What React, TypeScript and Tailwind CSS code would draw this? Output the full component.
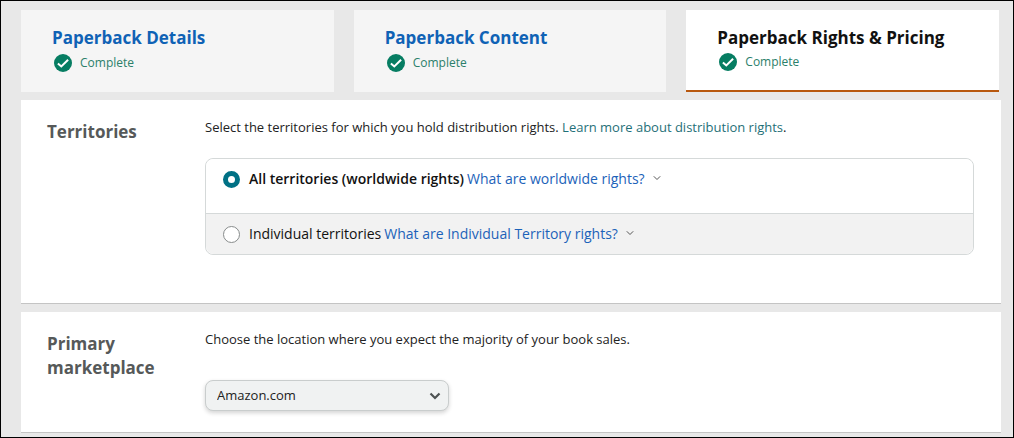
import React, { useState } from 'react';

type Step = { title: string; active?: boolean };

const steps: Step[] = [
  { title: 'Paperback Details' },
  { title: 'Paperback Content' },
  { title: 'Paperback Rights & Pricing', active: true },
];

const territoryOptions = [
  { id: 'worldwide', label: 'All territories (worldwide rights)', help: 'What are worldwide rights?' },
  { id: 'individual', label: 'Individual territories', help: 'What are Individual Territory rights?' },
];

const marketplaces = ['Amazon.com', 'Amazon.co.uk', 'Amazon.de', 'Amazon.fr', 'Amazon.es', 'Amazon.it'];

const CheckBadge: React.FC = () => (
  <svg viewBox="0 0 18 18" className="w-[18px] h-[18px] shrink-0" aria-hidden="true">
    <circle cx="9" cy="9" r="9" fill="#067d62" />
    <path d="M3.9 9.4 L7.3 12.4 L14.1 5.7" fill="none" stroke="#fff" strokeWidth="2" />
  </svg>
);

const StepTab: React.FC<{ step: Step }> = ({ step }) => (
  <li className={`flex-1 h-[82px] px-[31px] pt-4 ${step.active ? 'bg-white border-b-2 border-[#b8580f]' : 'bg-[#f5f5f5]'}`}>
    <h2 className="text-[17px] leading-6 font-bold whitespace-nowrap">
      {step.active ? (
        <span className="text-[#111]">{step.title}</span>
      ) : (
        <a href="#" className="text-[#0f62b5]">{step.title}</a>
      )}
    </h2>
    <p className={`flex items-center gap-2 pl-0.5 text-xs leading-[18px] text-[#2b806a] ${step.active ? 'pt-[3px]' : 'pt-1'}`}>
      <CheckBadge />
      Complete
    </p>
  </li>
);

const Panel: React.FC<{ title: string; className: string; children: React.ReactNode }> = ({ title, className, children }) => (
  <section className={`flex bg-white border-b border-[#c4c4c4] pl-[26px] pr-[27px] pt-[17px] ${className}`}>
    <h3 className="w-[158px] shrink-0 pr-8 pt-[3px] text-[17px] leading-6 font-bold text-[#565959]">{title}</h3>
    <div className="flex-1 min-w-0">{children}</div>
  </section>
);

const App: React.FC = () => {
  const [territory, setTerritory] = useState('worldwide');
  const [marketplace, setMarketplace] = useState(marketplaces[0]);

  return (
    <main className="min-h-screen border border-black bg-[#e8e8e8] pl-5 pr-3 pt-[9px] font-['Open_Sans',sans-serif] text-[13px] leading-5 text-[#222]">
      <ol className="flex gap-5 pr-0.5">
        {steps.map(step => <StepTab key={step.title} step={step} />)}
      </ol>

      <div className="flex flex-col gap-2 pt-2">
        <Panel title="Territories" className="pb-12">
          <p>
            Select the territories for which you hold distribution rights.{' '}
            <a href="#" className="text-[#1f7078]">Learn more about distribution rights</a>.
          </p>
          <fieldset className="mt-[21px] rounded-lg border border-[#d5d9d9] overflow-hidden">
            {territoryOptions.map(({ id, label, help }) => {
              const selected = territory === id;
              return (
                <div key={id} className={`flex items-center pl-[17px] pt-2.5 border-[#d5d9d9] ${id === 'worldwide' ? 'border-b pb-6' : 'pb-2.5'} ${selected ? 'bg-white' : 'bg-[#f2f2f2]'}`}>
                  <input
                    type="radio"
                    id={id}
                    name="territory"
                    checked={selected}
                    onChange={() => setTerritory(id)}
                    className="appearance-none w-[17px] h-[17px] shrink-0 rounded-full bg-white border border-[#888c8c] checked:border-[5px] checked:border-[#007185]"
                  />
                  <label htmlFor={id} className={`pl-[9px] text-sm leading-5 text-[#111] ${selected ? 'font-semibold' : ''}`}>{label}</label>
                  <button type="button" className="flex items-center gap-2 pl-[3px] text-sm leading-5 text-[#1c62b9]">
                    {help}
                    <svg viewBox="0 0 8 8" className="w-2 h-2 -mt-0.5" fill="none" stroke="#555" aria-hidden="true">
                      <path d="M0.8 2.3 L4 5.5 L7.2 2.3" />
                    </svg>
                  </button>
                </div>
              );
            })}
          </fieldset>
        </Panel>

        <Panel title="Primary marketplace" className="pb-[21px]">
          <label htmlFor="marketplace" className="block">
            Choose the location where you expect the majority of your book sales.
          </label>
          <div className="relative mt-[31px] w-[244px]">
            <select
              id="marketplace"
              value={marketplace}
              onChange={e => setMarketplace(e.target.value)}
              className="appearance-none block w-full h-[31px] rounded-lg border border-[#c9cdcd] bg-[#f0f2f2] pl-[11px] pr-8 pb-0.5 text-[13px] text-[#222] shadow-[0_2px_4px_rgba(15,17,17,0.18)]"
            >
              {marketplaces.map(m => <option key={m}>{m}</option>)}
            </select>
            <svg viewBox="0 0 12 8" className="absolute right-2 top-3 w-3 h-2 pointer-events-none" fill="none" stroke="#4d5252" strokeWidth="2.2" aria-hidden="true">
              <path d="M1.5 1.5 L6 6 L10.5 1.5" />
            </svg>
          </div>
        </Panel>
      </div>
    </main>
  );
};

export default App;
